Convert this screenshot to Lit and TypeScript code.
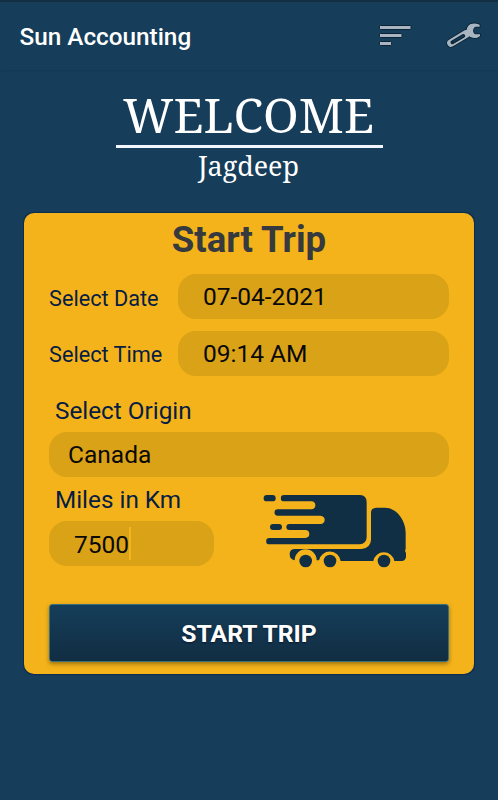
import { LitElement, html, css, svg } from "lit";
import { customElement, property, state } from "lit/decorators.js";

const sortIcon = html`<svg class="sort" viewBox="0 0 34 23" width="34" height="23">
  ${[[0, 32], [8, 23], [16, 12.5]].map(
    ([y, w]) => svg`<rect x="1.5" y=${y + 1.5} width=${w - 0.5} height="4" rx=".8"
      fill="#a9b6c1" stroke="#0a2234" stroke-width="1" />`,
  )}
</svg>`;

const wrenchJaw =
  "M101 8 C88 2 74 3 67 11 C60 20 61 32 67 40 C76 51 95 50 102 42 V37 H88 C79 32 79 20 88 14 H101 Z";
const wrenchIcon = html`<svg class="wrench" viewBox="0 0 108 81" width="36" height="27">
  <g fill="none" stroke-linecap="round" stroke-linejoin="round">
    <path d="M15 63 L62 35" stroke="#0a2234" stroke-width="28" />
    <path d=${wrenchJaw} fill="#0a2234" stroke="#0a2234" stroke-width="5" />
    <path d="M15 63 L62 35" stroke="#a9b6c1" stroke-width="23" />
    <path d=${wrenchJaw} fill="#a9b6c1" />
    <path d="M19 61 L52 41.500" stroke="#0a2234" stroke-width="11" />
    <path d="M20 60 L52 41.500" stroke="#163d59" stroke-width="4" />
  </g>
</svg>`;

const truck = html`<svg class="truck" viewBox="39 42 432 222" width="144" height="74">
  <g fill="#102f45">
    <rect x="41" y="45" width="36" height="19" rx="9.5" />
    <rect x="60" y="132" width="36" height="18" rx="9" />
    <path d="M102 45 H330 Q350 46 350 66 V172 Q349 192 329 193 H58 A9 9 0 0 1 58 174 H166 Q178 173 178 162 Q178 151 166 150 H118 A9 9 0 0 1 118 132 H211 Q224 131 224 119 Q224 108 211 107 H83 A9.500 9.500 0 0 1 83 88 H184 Q196 87 196 76 Q196 65 184 64 H102 A9.500 9.500 0 0 1 102 45 Z" />
    <path d="M363 98 Q363 84 378 83 H405 C438 83 467 119 467 158 V207 L465 213 L468 219 V230 Q467 242 455 243 H433 A32 32 0 0 0 370 243 H272 A33 33 0 0 0 207 241 H200 A33 33 0 0 0 134 241 Q119 238 119 223 Q119 207 135 207 H335 Q362 203 363 180 Z" />
    <circle cx="167" cy="243" r="19" />
    <circle cx="240" cy="243" r="19" />
    <circle cx="402" cy="243" r="19" />
  </g>
</svg>`;

@customElement("app-bar")
class AppBar extends LitElement {
  @property() heading = "";
  static styles = css`
    :host {
      display: flex;
      align-items: center;
      box-sizing: border-box;
      height: 70px;
      padding: 2px 16px 0 19.5px;
      border-top: 2px solid #132f43;
      background: #163d59;
      box-shadow: 0 1px 2px rgba(10, 35, 52, 0.12);
    }
    .title {
      flex: 1;
      font: 500 24.3px/30px Roboto, sans-serif;
      color: #fff;
    }
    .sort { margin-right: 34px; }
    .sort, .wrench { display: block; margin-bottom: 3px; }
  `;
  render() {
    return html`<div class="title">${this.heading}</div>${sortIcon}${wrenchIcon}`;
  }
}

@customElement("value-field")
class ValueField extends LitElement {
  @property() value = "";
  @property({ type: Boolean }) caret = false;
  static styles = css`
    :host {
      display: flex;
      align-items: center;
      box-sizing: border-box;
      height: 45px;
      padding-left: var(--inset, 25px);
      padding-top: var(--drop, 1px);
      border-radius: 18px;
      background: #daa217;
      color: #090909;
      font: 400 24.5px/30px Roboto, sans-serif;
    }
    .caret { width: 2px; height: 33px; margin-top: -2px; background: #f5b31d; }
  `;
  render() {
    return html`<span>${this.value}</span>${this.caret ? html`<i class="caret"></i>` : ""}`;
  }
}

@customElement("app-root")
class AppRoot extends LitElement {
  @state() trip = { date: "07-04-2021", time: "09:14 AM", origin: "Canada", miles: "7500" };
  static styles = css`
    :host {
      display: block;
      height: 800px;
      overflow: hidden;
      background: #163d59;
      font-family: Roboto, sans-serif;
    }
    .welcome {
      display: flex;
      flex-direction: column;
      align-items: center;
      height: 143px;
      color: #fff;
      font-family: "Noto Serif", "DejaVu Serif Condensed", "DejaVu Serif", serif;
    }
    .greeting {
      box-sizing: border-box;
      width: 267px;
      height: 78px;
      padding-top: 14px;
      border-bottom: 3px solid #f4f6ff;
    }
    .greeting, .name { display: flex; justify-content: center; padding-right: 1px; }
    .line { display: block; overflow: visible; fill: #fff; }
    .big { font-size: 48px; }
    .small { font-size: 27px; }
    .card {
      box-sizing: border-box;
      width: 450px;
      height: 461px;
      margin: 0 24px;
      padding: 5px 25px 0;
      border-radius: 10px;
      background: #f5b31b;
      box-shadow: 0 0 1px 0.5px #0b2c50;
    }
    h2 {
      margin: 0 0 12px;
      font: 700 36.6px/44px Roboto, sans-serif;
      text-align: center;
      color: #363a3e;
    }
    .row {
      display: grid;
      grid-template-columns: 129px 1fr;
      align-items: center;
      margin-bottom: 12px;
      font-size: 21.7px;
      color: #071d44;
    }
    .row + .row { margin-top: -0.5px; --drop: 2px; }
    .row label { padding-top: 3px; }
    .label { display: block; padding-left: 6px; font-size: 24.3px; line-height: 30px; color: #071d44; }
    .origin { margin-top: 20.5px; }
    .canada { --inset: 19px; margin: 6px 0 8px; }
    .lower { display: flex; --drop: 2px; }
    .miles { width: 165px; }
    .miles value-field { margin-top: 6px; }
    .truck { margin: 9px 0 0 49px; }
    button {
      display: block;
      box-sizing: border-box;
      width: 400px;
      height: 58px;
      margin-top: 36px;
      padding: 2px 0 0;
      border: 1px solid #38717c;
      border-radius: 3px;
      background: linear-gradient(#153e5a, #112d42);
      box-shadow: 0 2px 4px rgba(80, 60, 0, 0.55);
      color: #fff;
      font: 700 24.7px/30px Roboto, sans-serif;
      text-shadow: 0 1px 2px #07182b;
    }
  `;
  render() {
    const t = this.trip;
    return html`
      <app-bar heading="Sun Accounting"></app-bar>
      <header class="welcome">
        <div class="greeting">
          <svg class="line big" width="251" height="56">
            <text x="0" y="49" textLength="251" lengthAdjust="spacingAndGlyphs">WELCOME</text>
          </svg>
        </div>
        <div class="name">
          <svg class="line small" width="101" height="36">
            <text x="0" y="28" textLength="101" lengthAdjust="spacingAndGlyphs">Jagdeep</text>
          </svg>
        </div>
      </header>
      <main class="card">
        <h2>Start Trip</h2>
        <div class="row"><label>Select Date</label><value-field value=${t.date}></value-field></div>
        <div class="row"><label>Select Time</label><value-field value=${t.time}></value-field></div>
        <label class="label origin">Select Origin</label>
        <value-field class="canada" value=${t.origin}></value-field>
        <div class="lower">
          <div class="miles">
            <label class="label">Miles in Km</label>
            <value-field caret value=${t.miles}></value-field>
          </div>
          ${truck}
        </div>
        <button>START TRIP</button>
      </main>
    `;
  }
}
